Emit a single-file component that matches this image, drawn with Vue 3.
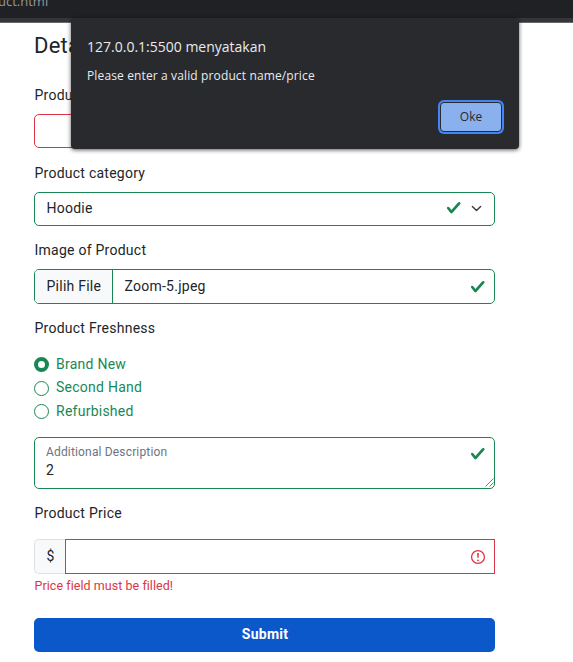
<script setup>
import { ref } from 'vue'

const conditions = ['Brand New', 'Second Hand', 'Refurbished']
const selected = ref('Brand New')
</script>

<template>
  <div class="page">
    <header class="browser-bar"><span>uct.html</span></header>

    <main class="form">
      <h1 class="title">Details</h1>

      <section class="field">
        <div class="label">Product name</div>
        <div class="control invalid"></div>
      </section>

      <section class="field category">
        <div class="label">Product category</div>
        <div class="control valid">
          <span class="value">Hoodie</span>
          <svg class="check" viewBox="0 0 8 8"><path fill="#198754" d="M2.3 6.73.6 4.53c-.4-1.04.46-1.4 1.1-.8l1.1 1.4 3.4-3.8c.6-.63 1.6-.27 1.2.7l-4 4.6c-.43.5-.8.4-1.1.1z" /></svg>
          <svg class="chevron" viewBox="0 0 16 16"><path fill="none" stroke="#343a40" stroke-linecap="round" stroke-linejoin="round" stroke-width="2" d="m2 5 6 6 6-6" /></svg>
        </div>
      </section>

      <section class="field image">
        <div class="label">Image of Product</div>
        <div class="control valid file">
          <span class="pick">Pilih File</span>
          <span class="value">Zoom-5.jpeg</span>
          <svg class="check" viewBox="0 0 8 8"><path fill="#198754" d="M2.3 6.73.6 4.53c-.4-1.04.46-1.4 1.1-.8l1.1 1.4 3.4-3.8c.6-.63 1.6-.27 1.2.7l-4 4.6c-.43.5-.8.4-1.1.1z" /></svg>
        </div>
      </section>

      <section class="freshness">
        <div class="label">Product Freshness</div>
        <div class="options">
          <div v-for="item in conditions" :key="item" class="option" @click="selected = item">
            <span class="radio" :class="{ on: selected === item }"></span>
            <span>{{ item }}</span>
          </div>
        </div>
      </section>

      <div class="control valid description">
        <div class="copy">
          <span class="hint">Additional Description</span>
          <span class="note">2</span>
        </div>
        <svg class="check" viewBox="0 0 8 8"><path fill="#198754" d="M2.3 6.73.6 4.53c-.4-1.04.46-1.4 1.1-.8l1.1 1.4 3.4-3.8c.6-.63 1.6-.27 1.2.7l-4 4.6c-.43.5-.8.4-1.1.1z" /></svg>
        <svg class="grip" viewBox="0 0 9 9"><path fill="none" stroke="#555" stroke-width=".8" d="M.5 8.5l8-8M4.5 8.5l4-4" /></svg>
      </div>

      <section class="price">
        <div class="label">Product Price</div>
        <div class="group">
          <span class="currency">$</span>
          <div class="control invalid amount">
            <svg class="alert" viewBox="0 0 12 12" fill="none" stroke="#dc3545"><circle cx="6" cy="6" r="4.3" stroke-width=".85" /><path stroke-linejoin="round" stroke-width=".8" d="M5.8 3.7h.4L6 6.3z" /><circle cx="6" cy="8.2" r=".6" fill="#dc3545" stroke="none" /></svg>
          </div>
        </div>
        <div class="error">Price field must be filled!</div>
      </section>

      <button class="submit">Submit</button>
    </main>

    <div class="dialog" role="alertdialog">
      <div class="origin">127.0.0.1:5500 menyatakan</div>
      <div class="message">Please enter a valid product name/price</div>
      <button class="ok">Oke</button>
    </div>
  </div>
</template>

<style>
body {
  margin: 0;
  background: #fff;
  overflow: hidden;
}
</style>

<style scoped>
.page, .page * {
  box-sizing: border-box;
}
.page {
  position: relative;
  width: 573px;
  height: 662px;
  overflow: hidden;
  font: 14px/20px Roboto, sans-serif;
  letter-spacing: 0.25px;
  color: #212529;
  white-space: nowrap;
}
.browser-bar {
  height: 23px;
  overflow: hidden;
  background: linear-gradient(#202124 0 18px, #35363a 18px 22px, #66676a 22px);
  color: #94979b;
  font: 13px/16px "Open Sans", sans-serif;
  letter-spacing: 0;
}
.browser-bar span {
  display: block;
  margin: -7px 0 0 -2px;
}
.form {
  display: flex;
  flex-direction: column;
  width: 461px;
  margin-left: 34px;
}
.title {
  height: 62px;
  margin: 0;
  padding-top: 9px;
  font-size: 22px;
  line-height: 28px;
  font-weight: 400;
}
.label {
  height: 29px;
  padding-left: 0.5px;
}
.field {
  height: 78px;
}
.image {
  height: 77px;
}
.category {
  height: 77px;
}
.control {
  display: flex;
  align-items: center;
  height: 34px;
  border: 1px solid #198754;
  border-radius: 5px;
  padding: 0 9px 0 11px;
}
.control.invalid {
  border-color: #dc3545;
}
.value {
  flex: 1;
  padding: 0 0 2px 0.5px;
}
.check {
  width: 15.5px;
  height: 15.5px;
}
.category .check {
  margin-bottom: 2px;
}
.chevron {
  width: 11px;
  height: 11px;
  margin: 0 3.5px 1px 9px;
}
.file {
  height: 35px;
  padding-left: 0;
}
.pick {
  align-self: stretch;
  width: 78px;
  padding-left: 11.5px;
  line-height: 33px;
  background: #f8f9fa;
  border-right: 1px solid #198754;
  border-radius: 4px 0 0 4px;
  margin-right: 11px;
}
.freshness {
  height: 120px;
  padding-top: 1px;
}
.options {
  display: flex;
  flex-direction: column;
  padding-top: 5px;
}
.option {
  display: flex;
  align-items: center;
  gap: 7px;
  height: 23.5px;
  color: #198754;
}
.radio {
  width: 15px;
  height: 15px;
  border: 1px solid #198754;
  border-radius: 50%;
  margin-top: 2px;
}
.radio.on {
  border-width: 4.5px;
}
.description {
  position: relative;
  height: 52px;
  align-items: flex-start;
}
.copy {
  display: flex;
  flex: 1;
  flex-direction: column;
  padding-top: 5px;
}
.hint {
  font-size: 12px;
  line-height: 18px;
  letter-spacing: 0.16px;
  color: #6c757d;
}
.note {
  line-height: 18px;
}
.description .check {
  margin-top: 8px;
}
.grip {
  position: absolute;
  right: 0;
  bottom: 1px;
  width: 9px;
  height: 9px;
}
.price {
  height: 129px;
  padding-top: 14px;
}
.price .label {
  height: 36px;
}
.group {
  display: flex;
}
.currency {
  width: 31px;
  height: 35px;
  padding-left: 11.5px;
  line-height: 33px;
  background: #f8f9fa;
  border: 1px solid #dee2e6;
  border-right: 0;
  border-radius: 5px 0 0 5px;
}
.amount {
  flex: 1;
  height: 35px;
  justify-content: flex-end;
  border-radius: 0;
  padding-right: 7px;
}
.alert {
  width: 18px;
  height: 18px;
}
.error {
  padding-top: 2px;
  padding-left: 0.5px;
  color: #dc3545;
  font-size: 12.5px;
  letter-spacing: 0.05px;
}
.submit {
  height: 34px;
  border: 0;
  border-radius: 5px;
  background: #0a58ca;
  color: #fff;
  font: 700 14px/20px Roboto, sans-serif;
  letter-spacing: 0.25px;
  padding: 0 0 2px 1px;
}
.dialog {
  position: absolute;
  left: 71px;
  top: 18px;
  width: 448px;
  height: 131px;
  display: flex;
  flex-direction: column;
  padding: 19px 16px 16px;
  border-radius: 4px;
  background: #292a2d;
  box-shadow: 0 1px 4px rgba(0, 0, 0, 0.65);
  color: #e8eaed;
  font: 12px/20px "Open Sans", sans-serif;
  letter-spacing: 0;
}
.origin {
  font-size: 14px;
}
.message {
  margin-top: 9px;
  letter-spacing: 0.13px;
}
.ok {
  align-self: flex-end;
  width: 62px;
  height: 30px;
  margin: 16px 1px 0 0;
  padding: 0;
  border: 1px solid #292a2d;
  border-radius: 4px;
  background: #8ab0ee;
  box-shadow: 0 0 0 2px #4285f4;
  color: #292a2d;
  font: 12px/20px "Open Sans", sans-serif;
}
</style>
